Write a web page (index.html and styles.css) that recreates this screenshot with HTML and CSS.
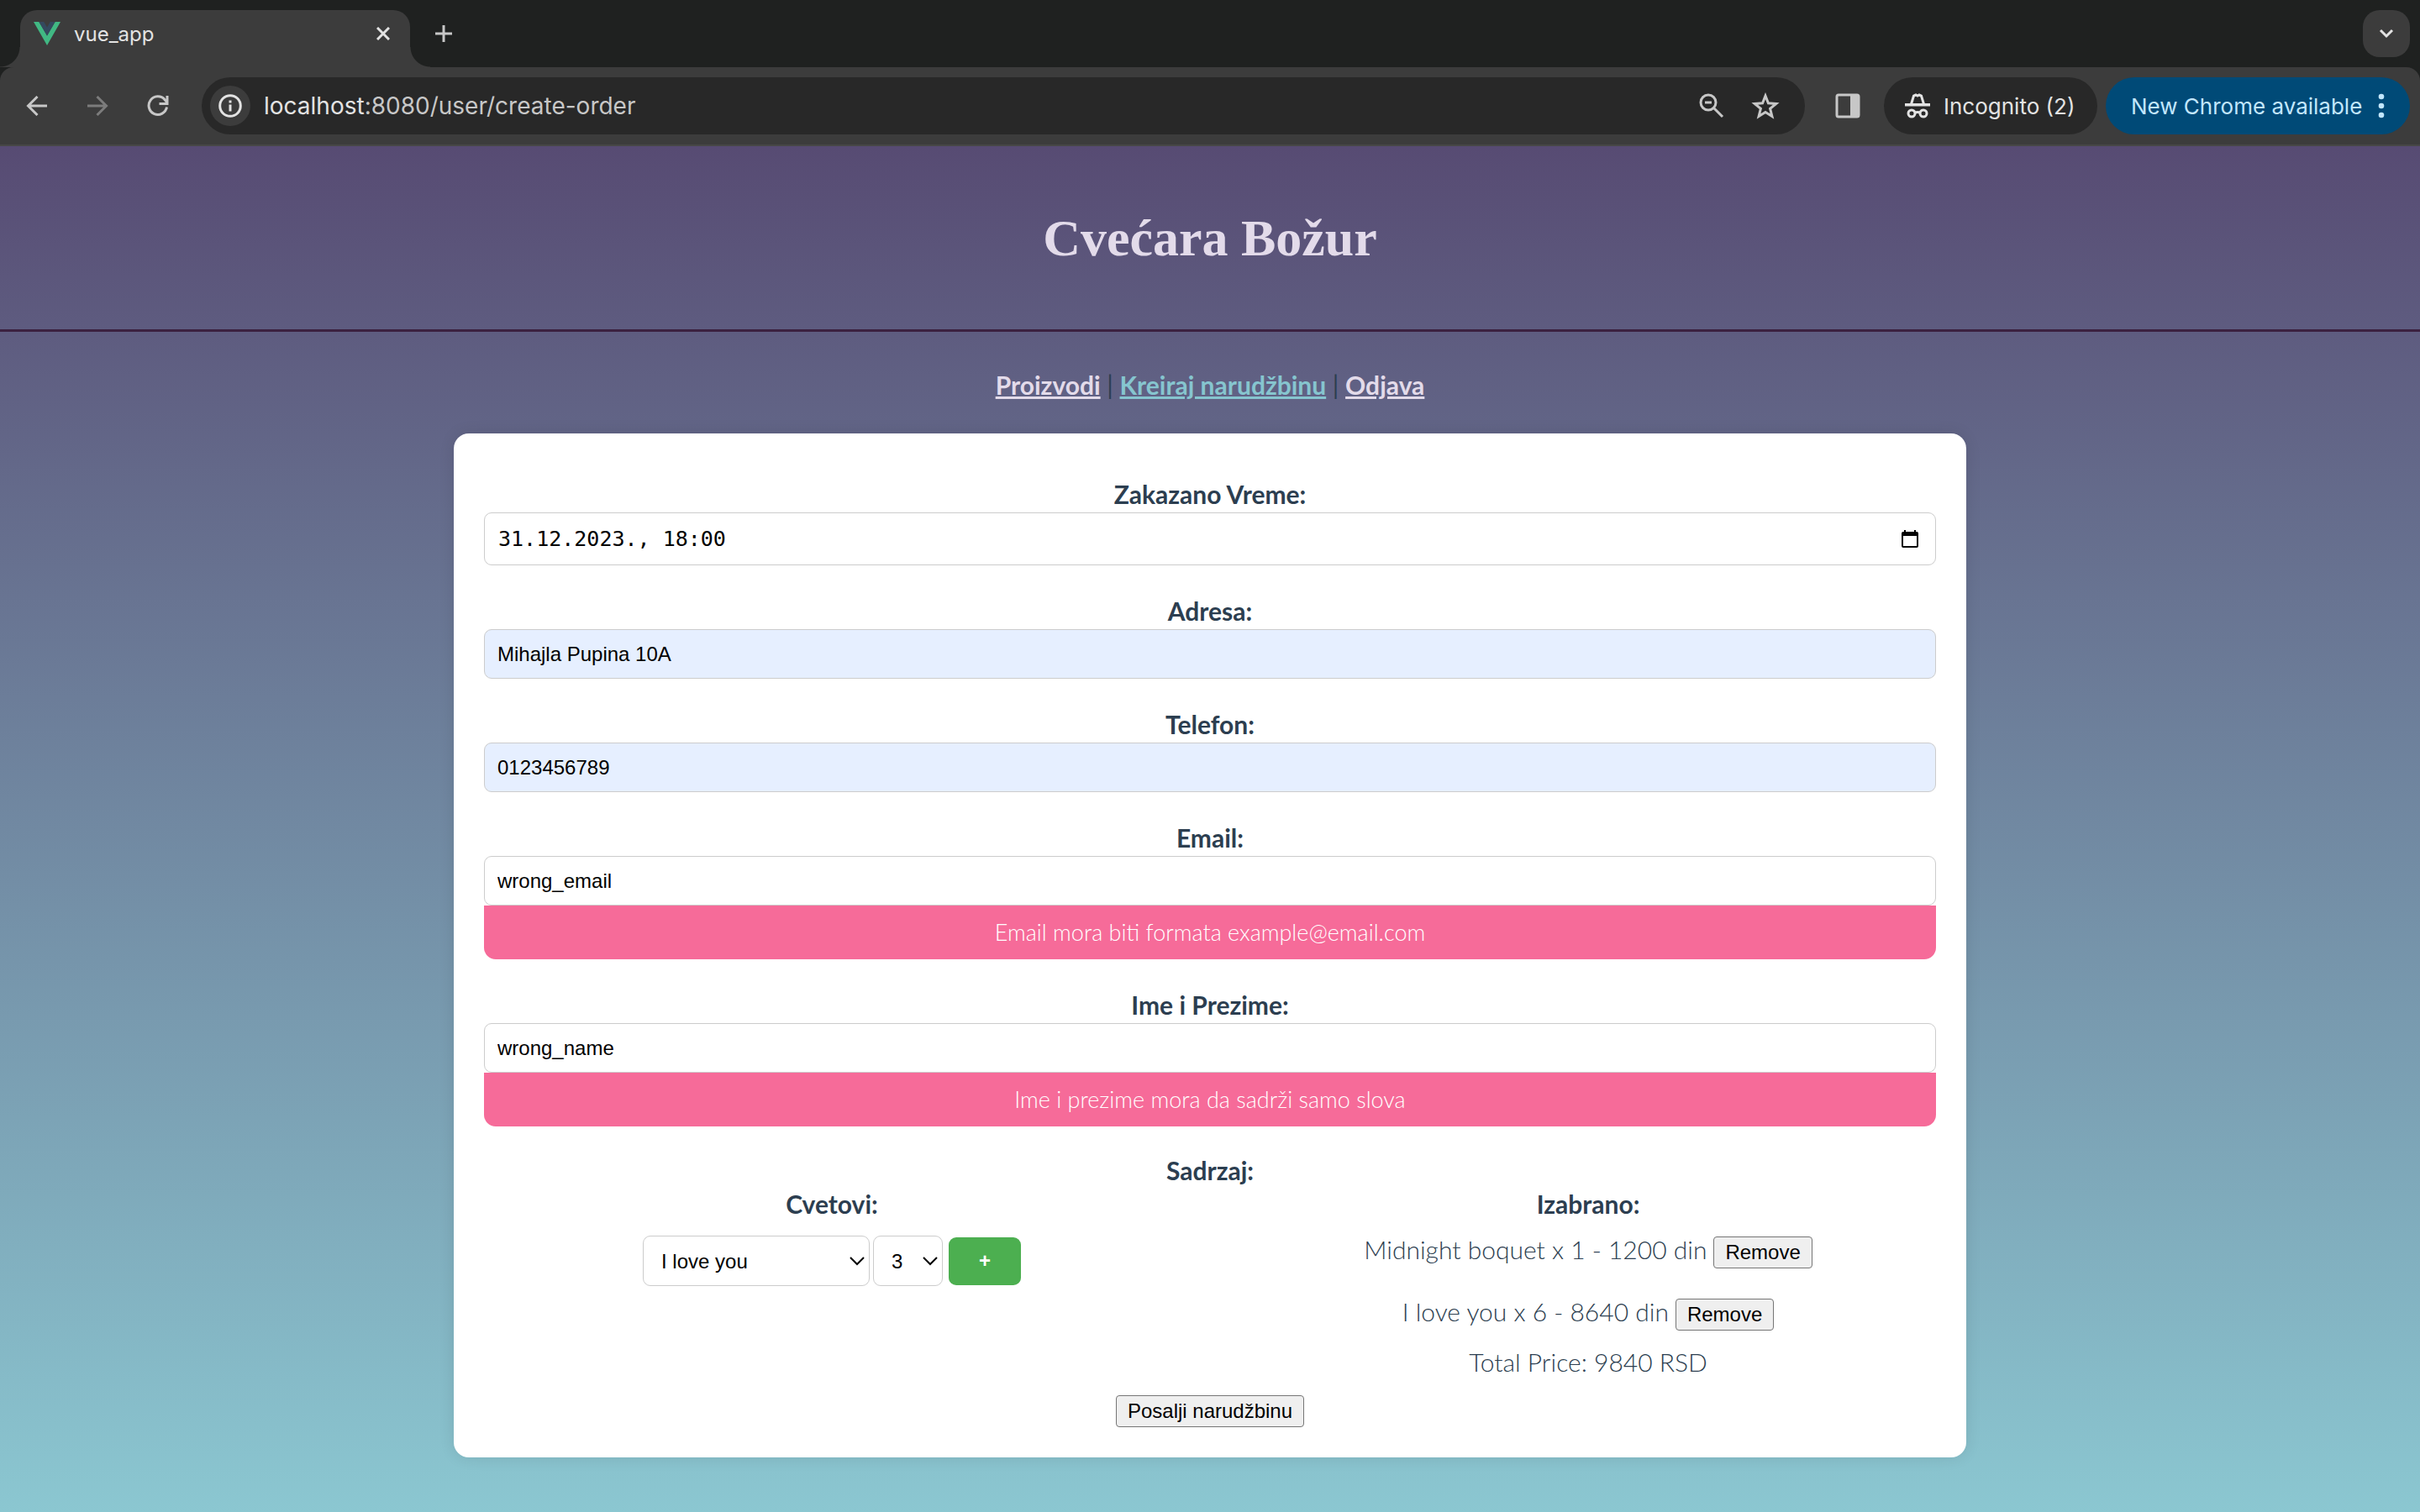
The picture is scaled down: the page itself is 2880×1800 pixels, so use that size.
FILE: index.html
```html
<!DOCTYPE html>
<html lang="sr-Latn">
<head>
<meta charset="utf-8">
<title>vue_app</title>
<link rel="stylesheet" href="styles.css">
</head>
<body>
<div class="browser">
  <div class="tab-strip">
    <div class="tab">
      <svg class="vue-logo" viewBox="0 0 32 28"><path fill="#41b883" d="M0 0h6.400L16 16.600 25.600 0H32L16 28z"/><path fill="#34495e" d="M6.400 0h5.900L16 6.400 19.700 0h5.900L16 16.600z"/></svg>
      <span class="tab-title">vue_app</span>
      <button class="icon-btn tab-close" aria-label="Close tab"><svg width="16" height="16" viewBox="0 0 16 16"><path d="M1 1l14 14M15 1L1 15" stroke="#e3e3e3" stroke-width="3" fill="none"/></svg></button>
    </div>
    <button class="icon-btn new-tab" aria-label="New tab"><svg width="20" height="20" viewBox="0 0 20 20"><path d="M10 0v20M0 10h20" stroke="#c7c7c7" stroke-width="3"/></svg></button>
    <button class="icon-btn tab-search" aria-label="Search tabs"><svg width="18" height="12" viewBox="0 0 18 12"><path d="M2 2l7 7 7-7" stroke="#e3e3e3" stroke-width="3" fill="none"/></svg></button>
  </div>
  <div class="toolbar">
    <div class="nav-buttons">
      <button class="icon-btn" aria-label="Back"><svg width="26" height="24" viewBox="0 0 26 24"><path d="M25 12H3M13.500 1L2.500 12l11 11" stroke="#c7c7c7" stroke-width="3" fill="none"/></svg></button>
      <button class="icon-btn" aria-label="Forward"><svg width="26" height="24" viewBox="0 0 26 24"><path d="M1 12h22M12.500 1l11 11-11 11" stroke="#7c7c7c" stroke-width="3" fill="none"/></svg></button>
      <button class="icon-btn" aria-label="Reload"><svg width="26" height="26" viewBox="0 0 26 26"><path d="M23.500 14.500A10.800 10.800 0 1 1 21 5.500l2.500 3" stroke="#c7c7c7" stroke-width="3" fill="none"/><path d="M24 1v9.500H14.500" stroke="#c7c7c7" stroke-width="3" fill="none"/></svg></button>
    </div>
    <div class="omnibox">
      <button class="icon-btn site-info" aria-label="Site information"><svg width="28" height="28" viewBox="0 0 28 28"><circle cx="14" cy="14" r="12.300" stroke="#e3e3e3" stroke-width="3" fill="none"/><path d="M14 12.500v8M14 7.500v3" stroke="#e3e3e3" stroke-width="3"/></svg></button>
      <span class="url">localhost<span class="url-rest">:8080/user/create-order</span></span>
      <button class="icon-btn" aria-label="Zoom"><svg width="30" height="30" viewBox="0 0 30 30"><circle cx="11" cy="11" r="9" stroke="#c7c7c7" stroke-width="3" fill="none"/><path d="M7 11h8M17.500 17.500L28 28" stroke="#c7c7c7" stroke-width="3"/></svg></button>
      <button class="icon-btn bookmark" aria-label="Bookmark"><svg width="34" height="32" viewBox="0 0 34 32"><path d="M17 4l3.400 8.700 9.400.700-7.200 6 2.300 9.100L17 23.600l-7.900 4.900 2.300-9.100-7.200-6 9.400-.7z" stroke="#c7c7c7" stroke-width="3" fill="none"/></svg></button>
    </div>
    <button class="icon-btn side-panel" aria-label="Side panel"><svg width="30" height="30" viewBox="0 0 30 30"><rect x="2" y="2" width="26" height="26" rx="2" stroke="#c7c7c7" stroke-width="3" fill="none"/><path d="M18 2h9v26h-9z" fill="#c7c7c7"/></svg></button>
    <div class="pill incognito">
      <svg width="30" height="30" viewBox="0 0 30 30"><path d="M0 12h30v3.500H0z" fill="#e3e3e3"/><path d="M7.500 13L10.500 3 13 2l2 1 2-1 2.500 1 3 10" stroke="#e3e3e3" stroke-width="3" fill="none"/><circle cx="8" cy="24" r="4" stroke="#e3e3e3" stroke-width="3" fill="none"/><circle cx="22" cy="24" r="4" stroke="#e3e3e3" stroke-width="3" fill="none"/><path d="M11.500 23.500q3.500-2 7 0" stroke="#e3e3e3" stroke-width="3" fill="none"/></svg>
      <span>Incognito (2)</span>
    </div>
    <button class="pill update">
      <span>New Chrome available</span>
      <svg width="8" height="30" viewBox="0 0 8 30"><g fill="#c2e7ff"><circle cx="4" cy="4" r="3.300"/><circle cx="4" cy="15" r="3.300"/><circle cx="4" cy="26" r="3.300"/></g></svg>
    </button>
  </div>
</div>
<div class="page">
  <header class="site-header"><h1>Cvećara Božur</h1></header>
  <nav class="site-nav"><a href="#">Proizvodi</a> | <a href="#" class="active">Kreiraj narudžbinu</a> | <a href="#">Odjava</a></nav>
  <form class="card">
    <div class="field">
      <label for="time">Zakazano Vreme:</label>
      <div class="date-box">
        <input id="time" type="text" value="31.12.2023., 18:00">
        <button type="button" class="icon-btn" aria-label="Kalendar"><svg width="20" height="22" viewBox="0 0 20 22"><path fill="#000" d="M3 0h2v2h10V0h2v2h1a2 2 0 0 1 2 2v15a2 2 0 0 1-2 2H2a2 2 0 0 1-2-2V4a2 2 0 0 1 2-2h1zM2 7v12h16V7z"/></svg></button>
      </div>
    </div>
    <div class="field">
      <label for="address">Adresa:</label>
      <input id="address" class="text-input autofilled" type="text" value="Mihajla Pupina 10A">
    </div>
    <div class="field">
      <label for="phone">Telefon:</label>
      <input id="phone" class="text-input autofilled" type="text" value="0123456789">
    </div>
    <div class="field">
      <label for="email">Email:</label>
      <input id="email" class="text-input" type="text" value="wrong_email">
      <p class="error">Email mora biti formata example@email.com</p>
    </div>
    <div class="field">
      <label for="name">Ime i Prezime:</label>
      <input id="name" class="text-input" type="text" value="wrong_name">
      <p class="error">Ime i prezime mora da sadrži samo slova</p>
    </div>
    <section class="contents">
      <h2>Sadrzaj:</h2>
      <div class="columns">
        <div class="column">
          <label for="flower">Cvetovi:</label>
          <div class="picker">
            <div class="select-box flower">
              <select id="flower"><option>I love you</option><option>Midnight boquet</option></select>
              <svg class="chevron" width="18" height="11" viewBox="0 0 18 11"><path d="M1 1l8 8 8-8" stroke="#000" stroke-width="2" fill="none"/></svg>
            </div>
            <div class="select-box amount">
              <select aria-label="Količina"><option>3</option></select>
              <svg class="chevron" width="18" height="11" viewBox="0 0 18 11"><path d="M1 1l8 8 8-8" stroke="#000" stroke-width="2" fill="none"/></svg>
            </div>
            <button type="button" class="add">+</button>
          </div>
        </div>
        <div class="column">
          <h3>Izabrano:</h3>
          <ul class="chosen">
            <li>Midnight boquet x 1 - 1200 din <button type="button" class="plain">Remove</button></li>
            <li>I love you x 6 - 8640 din <button type="button" class="plain">Remove</button></li>
          </ul>
          <p class="total">Total Price: 9840 RSD</p>
        </div>
      </div>
    </section>
    <button type="button" class="plain submit">Posalji narudžbinu</button>
  </form>
</div>
</body>
</html>
```

FILE: styles.css
```css
* { box-sizing: border-box; }

body {
  margin: 0;
  min-height: 100vh;
  display: flex;
  flex-direction: column;
  color: #2c3e50;
  font-family: Lato, "Open Sans", sans-serif;
  font-size: 30px;
}

h1, h2, h3, p, ul { margin: 0; padding: 0; }
button, input, select { font-family: "Liberation Sans", Arial, sans-serif; font-size: 24px; color: #000; }
svg { display: block; flex: none; }

/* Browser window */
.browser { font-family: Inter, sans-serif; background: #1f2120; color: #e3e3e3; }

.icon-btn {
  display: flex;
  align-items: center;
  justify-content: center;
  flex: none;
  padding: 0;
  border: 0;
  background: none;
}

.tab-strip { display: flex; align-items: flex-start; height: 80px; padding: 12px 12px 0 24px; }

.tab {
  position: relative;
  display: flex;
  align-items: center;
  gap: 16px;
  width: 464px;
  height: 68px;
  padding: 0 24px 12px 16px;
  border-radius: 20px 20px 0 0;
  background: #3c3c3c;
  font-size: 24px;
}
.tab::before, .tab::after {
  content: "";
  position: absolute;
  bottom: 0;
  width: 24px;
  height: 24px;
}
.tab::before { right: 100%; background: radial-gradient(circle at 0 0, #1f2120 23px, #3c3c3c 24px); }
.tab::after { left: 100%; background: radial-gradient(circle at 100% 0, #1f2120 23px, #3c3c3c 24px); }
.vue-logo { width: 32px; height: 28px; }
.tab-title { flex: 1; }
.new-tab { width: 56px; height: 56px; margin-left: 12px; }
.tab-search { width: 56px; height: 56px; margin-left: auto; border-radius: 20px; background: #3c3c3c; }

.toolbar {
  display: flex;
  align-items: center;
  height: 94px;
  padding: 0 12px 0 16px;
  border-bottom: 2px solid #474747;
  border-radius: 16px 16px 0 0;
  background: #3c3c3c;
  font-size: 26px;
}
.nav-buttons { display: flex; gap: 16px; margin-right: 24px; }
.nav-buttons .icon-btn { width: 56px; height: 56px; }
.omnibox {
  display: flex;
  align-items: center;
  flex: 1;
  height: 68px;
  padding: 0 30px 0 10px;
  border-radius: 34px;
  background: #282828;
}
.site-info { width: 48px; height: 48px; margin-right: 16px; border-radius: 50%; background: #3c3c3c; }
.url { flex: 1; font-size: 28px; }
.url-rest { color: #c7c7c7; }
.bookmark { margin-left: 32px; }
.side-panel { margin: 0 28px 0 36px; }
.pill { display: flex; align-items: center; height: 68px; border: 0; border-radius: 34px; }
.incognito { gap: 16px; width: 254px; padding-left: 25px; margin-right: 10px; background: #282828; }
.update {
  justify-content: space-between;
  width: 362px;
  padding: 0 30px;
  background: #004a77;
  color: #c2e7ff;
  font-family: Inter, sans-serif;
  font-size: 26px;
}

/* Shop page */
.page { flex: 1; padding-bottom: 64px; background: linear-gradient(#574b73, #8bc7d1); text-align: center; }

.site-header { padding: 72px 0; border-bottom: 3px solid #3b2140; }
.site-header h1 {
  color: #e3dbea;
  font-family: "Liberation Serif", "Times New Roman", serif;
  font-size: 62px;
  line-height: 74px;
}

.site-nav { padding: 43px 0 38px; font-weight: 400; line-height: 40px; }
.site-nav a { color: #e3dbea; font-weight: 700; }
.site-nav .active { color: #86c5cf; }

.card {
  width: 62.5%;
  margin: 0 auto;
  padding: 36px;
  border-radius: 18px;
  background: #fff;
  box-shadow: 0 0 18px rgba(0, 0, 0, 0.1);
}

.field { display: flex; flex-direction: column; padding: 18px 0; }
label, h2, h3 { display: block; padding-bottom: 4px; font-size: 30px; font-weight: 700; line-height: 36px; }

.text-input, .date-box { height: 59px; border: 1px solid #ccc; border-radius: 9px; background: #fff; }
.text-input { padding: 0 15px; }
.autofilled { background: #e6efff; }
.date-box { display: flex; align-items: center; height: 63px; padding: 0 20px 0 16px; }
.date-box input { flex: 1; padding: 0; border: 0; background: none; font-family: "DejaVu Sans Mono", monospace; font-size: 25px; }

.error {
  padding: 14px;
  border-radius: 0 0 14px 14px;
  background: #f66b99;
  color: #fff;
  font-size: 27px;
  font-weight: 300;
  line-height: 36px;
}

.contents { padding-top: 16px; }
.columns { display: grid; grid-template-columns: 1fr 1fr; column-gap: 72px; }
.picker { display: flex; align-items: center; justify-content: center; padding-top: 16px; }
.select-box { position: relative; height: 60px; }
.select-box select {
  appearance: none;
  width: 100%;
  height: 100%;
  padding: 0 21px;
  border: 1px solid #ccc;
  border-radius: 9px;
  background: #fff;
}
.chevron { position: absolute; right: 6px; top: 25px; pointer-events: none; }
.flower { width: 270px; margin-right: 4px; }
.amount { width: 83px; margin-right: 7px; }
.add { width: 86px; height: 57px; border: 0; border-radius: 9px; background: #4caf50; color: #fff; font-weight: 700; }

.column { font-weight: 300; }
.chosen { list-style: none; }
.chosen li {
  display: flex;
  align-items: baseline;
  justify-content: center;
  gap: 8px;
  height: 74px;
  padding-top: 14px;
  line-height: 36px;
}
.total { line-height: 36px; }

.plain { height: 38px; padding: 0 13px; border: 1px solid #767676; border-radius: 4px; background: #efefef; }
.submit { display: block; margin: 22px auto 0; }
```
